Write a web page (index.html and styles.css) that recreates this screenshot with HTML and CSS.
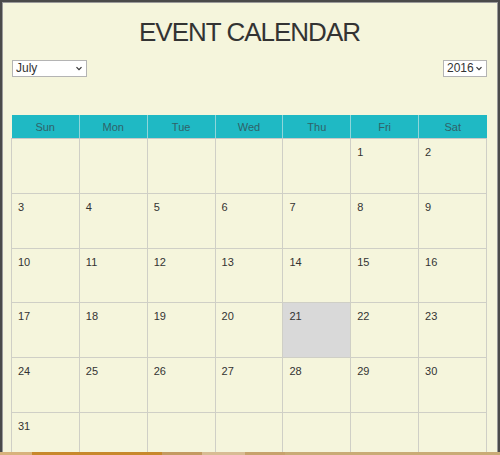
FILE: index.html
```html
<!DOCTYPE html>
<html>
<head>
<meta charset="utf-8">
<link rel="stylesheet" href="styles.css">
</head>
<body>
<div class="frame">
  <h1 class="title">EVENT CALENDAR</h1>
  <div class="controls">
    <div class="selwrap sel-month">
      <select class="sel"><option>July</option></select>
      <svg class="chev" width="8" height="5" viewBox="0 0 8 5"><path d="M1.5 1.2 L4 3.7 L6.5 1.2" fill="none" stroke="#333" stroke-width="1.2"/></svg>
    </div>
    <div class="selwrap sel-year">
      <select class="sel"><option>2016</option></select>
      <svg class="chev" width="8" height="5" viewBox="0 0 8 5"><path d="M1.5 1.2 L4 3.7 L6.5 1.2" fill="none" stroke="#333" stroke-width="1.2"/></svg>
    </div>
  </div>
  <table class="cal">
    <thead>
      <tr><th>Sun</th><th>Mon</th><th>Tue</th><th>Wed</th><th>Thu</th><th>Fri</th><th>Sat</th></tr>
    </thead>
    <tbody>
      <tr><td></td><td></td><td></td><td></td><td></td><td>1</td><td>2</td></tr>
      <tr><td>3</td><td>4</td><td>5</td><td>6</td><td>7</td><td>8</td><td>9</td></tr>
      <tr><td>10</td><td>11</td><td>12</td><td>13</td><td>14</td><td>15</td><td>16</td></tr>
      <tr><td>17</td><td>18</td><td>19</td><td>20</td><td class="today">21</td><td>22</td><td>23</td></tr>
      <tr><td>24</td><td>25</td><td>26</td><td>27</td><td>28</td><td>29</td><td>30</td></tr>
      <tr><td>31</td><td></td><td></td><td></td><td></td><td></td><td></td></tr>
    </tbody>
  </table>
</div>
<div class="taskbar">
  <span class="seg s1"></span><span class="seg s2"></span><span class="seg s3"></span><span class="seg s4"></span><span class="seg s5"></span><span class="seg s6"></span>
</div>
</body>
</html>
```

FILE: styles.css
```css
html, body {
  margin: 0;
  padding: 0;
  background: #f5f5dc;
  font-family: "Liberation Sans", Arial, sans-serif;
  color: #333;
  overflow: hidden;
}
.frame {
  box-sizing: border-box;
  height: 452px;
  border: 2px solid #4a4a4a;
  border-bottom: none;
  box-shadow: inset 1px 1px 0 #9a9a9a, inset -1px 0 0 #9a9a9a;
  padding: 0 0 0 9px;
  overflow: hidden;
}
.title {
  margin: 0;
  padding-top: 15px;
  height: 43px;
  text-align: center;
  font-weight: normal;
  font-size: 26px;
  letter-spacing: -1px;
  line-height: 30px;
  color: #333;
  margin-right: 10px;
}
.controls {
  display: flex;
  justify-content: space-between;
  width: 476px;
  height: 17px;
  padding-left: 1px;
  box-sizing: border-box;
}
.selwrap {
  position: relative;
  height: 17px;
}
.sel {
  box-sizing: border-box;
  width: 100%;
  height: 17px;
  font-family: "Liberation Sans", Arial, sans-serif;
  font-size: 12px;
  line-height: 15px;
  color: #333;
  background: #fff;
  border: 1px solid #b4b4b4;
  border-radius: 0;
  padding: 0 0 0 3px;
  margin: 0;
  -webkit-appearance: none;
  appearance: none;
  display: block;
}
.chev {
  position: absolute;
  right: 4px;
  top: 6px;
  pointer-events: none;
}
.sel-month { width: 75px; }
.sel-year { width: 44px; }
.cal {
  margin-top: 38px;
  width: 476px;
  border-collapse: collapse;
  table-layout: fixed;
}
.cal th {
  background: #1fb9c4;
  color: #2f6268;
  font-weight: normal;
  font-size: 11px;
  height: 23px;
  padding: 0;
  border: 1px solid #8fd6da;
  border-top: none;
  border-bottom: 1px solid #c8c8c8;
}
.cal th:first-child { border-left: none; }
.cal th:last-child { border-right: none; }
.cal td {
  height: 54.8px;
  box-sizing: border-box;
  border: 1px solid #cfcfc6;
  vertical-align: top;
  padding: 7px 6px 0;
  font-size: 11px;
  line-height: 13px;
  color: #333;
}
.cal td.today { background: #d9d9d9; }
.taskbar {
  display: flex;
  height: 3px;
}
.seg { display: block; height: 3px; }
.s1 { width: 32px; background: #d8b27c; }
.s2 { width: 130px; background: #c8882c; }
.s3 { width: 40px; background: #c49a62; }
.s4 { width: 43px; background: #d8bc94; }
.s5 { width: 40px; background: #c7a26c; }
.s6 { flex: 1; background: #c9ab76; }
```
